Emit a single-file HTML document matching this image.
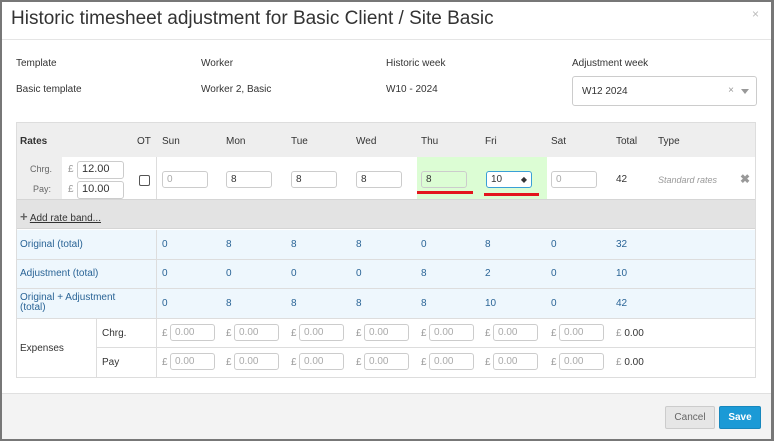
<!DOCTYPE html>
<html><head><style>
*{box-sizing:border-box;margin:0;padding:0}
body{width:774px;height:441px;background:#777;font-family:"Liberation Sans",Arial,sans-serif;font-size:10px;color:#333;position:relative;overflow:hidden}
.m{position:absolute;left:2px;top:2px;width:769px;height:437px;background:#fff}
.a{position:absolute;white-space:nowrap}
.in{position:absolute;height:17px;border:1px solid #ccc;border-radius:3px;background:#fff;font-size:10px;padding:2px 4px;line-height:11px;color:#333}
.ph{color:#aaa}
.bl{color:#2a6496}
.hl{position:absolute;height:1px;background:#ddd}
</style></head><body>
<div class="m"></div>
<div class="a" style="left:11px;top:8px;font-size:19px;color:#333">Historic timesheet adjustment for Basic Client / Site Basic</div>
<div class="a" style="left:752px;top:7px;font-size:12px;color:#bbb">×</div>
<div class="hl" style="left:2px;top:39px;width:769px;background:#e5e5e5"></div>
<div class="a" style="left:16px;top:58px">Template</div>
<div class="a" style="left:201px;top:58px">Worker</div>
<div class="a" style="left:386px;top:58px">Historic week</div>
<div class="a" style="left:572px;top:58px">Adjustment week</div>
<div class="a" style="left:16px;top:84px">Basic template</div>
<div class="a" style="left:201px;top:84px">Worker 2, Basic</div>
<div class="a" style="left:386px;top:84px">W10 - 2024</div>
<div class="in" style="left:572px;top:76px;width:185px;height:30px;padding:9px 9px;font-size:10px">W12 2024<span style="position:absolute;right:22px;top:8px;color:#999">×</span><span style="position:absolute;right:7px;top:12px;border:4px solid transparent;border-top:5px solid #999;border-bottom:0"></span></div>

<!-- table -->
<div class="a" style="left:16px;top:122px;width:740px;height:256px;border:1px solid #ddd"></div>
<div class="a" style="left:17px;top:123px;width:738px;height:34px;background:#eee"></div>
<div class="a" style="left:17px;top:157px;width:45px;height:42px;background:#eee"></div>
<div class="a" style="left:417px;top:157px;width:130px;height:42px;background:#dcfdd4"></div>
<div class="a" style="left:17px;top:199px;width:738px;height:30px;background:#e3e3e3;border-top:1px solid #d5d5d5;border-bottom:1px solid #d5d5d5"></div>
<div class="a" style="left:17px;top:230px;width:738px;height:88px;background:#eef7fd"></div>
<div class="hl" style="left:17px;top:259px;width:738px"></div>
<div class="hl" style="left:17px;top:288px;width:738px"></div>
<div class="hl" style="left:17px;top:318px;width:738px"></div>
<div class="hl" style="left:96px;top:347px;width:659px"></div>
<div class="a" style="left:156px;top:157px;width:1px;height:42px;background:#ddd"></div>
<div class="a" style="left:156px;top:230px;width:1px;height:148px;background:#ddd"></div>
<div class="a" style="left:96px;top:318px;width:1px;height:60px;background:#ddd"></div>

<div class="a" style="left:20px;top:136px;font-weight:bold">Rates</div>
<div class="a" style="left:137px;top:136px">OT</div>
<div class="a" style="left:162px;top:136px">Sun</div>
<div class="a" style="left:226px;top:136px">Mon</div>
<div class="a" style="left:291px;top:136px">Tue</div>
<div class="a" style="left:356px;top:136px">Wed</div>
<div class="a" style="left:421px;top:136px">Thu</div>
<div class="a" style="left:485px;top:136px">Fri</div>
<div class="a" style="left:551px;top:136px">Sat</div>
<div class="a" style="left:616px;top:136px">Total</div>
<div class="a" style="left:658px;top:136px">Type</div>

<div class="a" style="left:30px;top:164px;font-size:9px;color:#666">Chrg.</div>
<div class="a" style="left:33px;top:184px;font-size:9px;color:#666">Pay:</div>
<div class="a" style="left:68px;top:164px;color:#999">£</div>
<div class="a" style="left:68px;top:184px;color:#999">£</div>
<div class="in" style="left:77px;top:161px;width:47px;height:18px;font-size:11px">12.00</div>
<div class="in" style="left:77px;top:181px;width:47px;height:18px;font-size:11px">10.00</div>
<div class="a" style="left:139px;top:175px;width:11px;height:11px;border:1px solid #555;border-radius:2px;background:#fff"></div>
<div class="in ph" style="left:162px;top:171px;width:46px">0</div>
<div class="in" style="left:226px;top:171px;width:46px">8</div>
<div class="in" style="left:291px;top:171px;width:46px">8</div>
<div class="in" style="left:356px;top:171px;width:46px">8</div>
<div class="in" style="left:421px;top:171px;width:46px;background:#dcfdd4">8</div>
<div class="in" style="left:486px;top:171px;width:46px;border-color:#3a9fd6">10<span style="position:absolute;right:4px;top:2px;font-size:8px">◆</span></div>
<div class="in ph" style="left:551px;top:171px;width:46px">0</div>
<div class="a" style="left:417px;top:191px;width:56px;height:3px;background:#e3151d"></div>
<div class="a" style="left:484px;top:193px;width:55px;height:3px;background:#e3151d"></div>
<div class="a" style="left:616px;top:174px">42</div>
<div class="a" style="left:658px;top:175px;font-style:italic;color:#999;font-size:9px">Standard rates</div>
<div class="a" style="left:740px;top:172px;color:#999;font-size:12px;font-weight:bold">✖</div>

<div class="a" style="left:20px;top:209px;color:#333"><span style="font-size:13px;color:#666;font-weight:bold">+</span> <span style="text-decoration:underline">Add rate band...</span></div>

<div class="a bl" style="left:20px;top:239px">Original (total)</div>
<div class="a bl" style="left:20px;top:268px">Adjustment (total)</div>
<div class="a bl" style="left:20px;top:293px;white-space:normal;line-height:10px;width:120px">Original + Adjustment<br>(total)</div>
<div class="a bl" style="left:162px;top:239px;word-spacing:0">0</div><div class="a bl" style="left:226px;top:239px">8</div><div class="a bl" style="left:291px;top:239px">8</div><div class="a bl" style="left:356px;top:239px">8</div><div class="a bl" style="left:421px;top:239px">0</div><div class="a bl" style="left:485px;top:239px">8</div><div class="a bl" style="left:551px;top:239px">0</div><div class="a bl" style="left:616px;top:239px">32</div>
<div class="a bl" style="left:162px;top:268px">0</div><div class="a bl" style="left:226px;top:268px">0</div><div class="a bl" style="left:291px;top:268px">0</div><div class="a bl" style="left:356px;top:268px">0</div><div class="a bl" style="left:421px;top:268px">8</div><div class="a bl" style="left:485px;top:268px">2</div><div class="a bl" style="left:551px;top:268px">0</div><div class="a bl" style="left:616px;top:268px">10</div>
<div class="a bl" style="left:162px;top:298px">0</div><div class="a bl" style="left:226px;top:298px">8</div><div class="a bl" style="left:291px;top:298px">8</div><div class="a bl" style="left:356px;top:298px">8</div><div class="a bl" style="left:421px;top:298px">8</div><div class="a bl" style="left:485px;top:298px">10</div><div class="a bl" style="left:551px;top:298px">0</div><div class="a bl" style="left:616px;top:298px">42</div>

<div class="a" style="left:20px;top:343px">Expenses</div>
<div class="a" style="left:102px;top:328px">Chrg.</div>
<div class="a" style="left:102px;top:357px">Pay</div>

<div id="ex"></div>
<script>
var xs=[162,226,291,356,421,485,551],h='';
[324,353].forEach(function(y){xs.forEach(function(x){h+='<div class="a" style="left:'+x+'px;top:'+(y+4)+'px;color:#999">£</div><div class="in ph" style="left:'+(x+8)+'px;top:'+y+'px;width:45px">0.00</div>';});
h+='<div class="a" style="left:616px;top:'+(y+4)+'px"><span style="color:#999">£</span> 0.00</div>';});
document.getElementById('ex').innerHTML=h;
</script>

<div class="a" style="left:2px;top:393px;width:769px;height:46px;background:#f3f3f3;border-top:1px solid #e0e0e0"></div>
<div class="a" style="left:665px;top:406px;width:50px;height:23px;background:#e6e6e6;border:1px solid #ccc;border-radius:2px;color:#666;text-align:center;line-height:21px;font-size:10px">Cancel</div>
<div class="a" style="left:719px;top:406px;width:42px;height:23px;background:#1b9ad6;border:1px solid #1787bd;border-radius:2px;color:#fff;text-align:center;line-height:21px;font-size:10px;font-weight:bold">Save</div>
</body></html>
